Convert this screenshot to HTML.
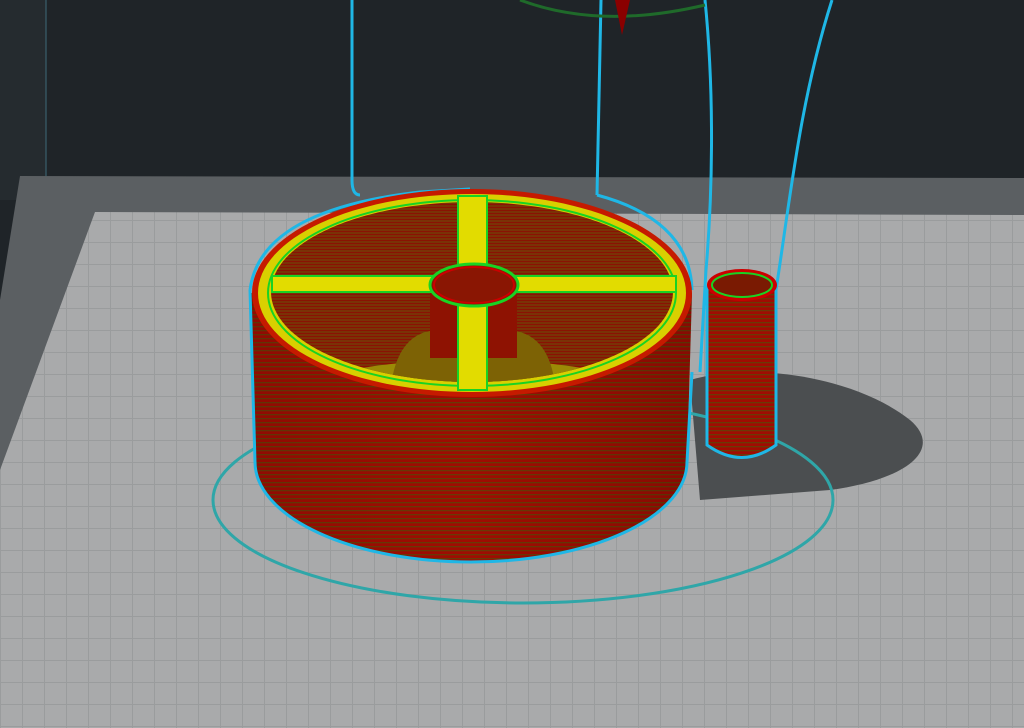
<!DOCTYPE html>
<html><head><style>html,body{margin:0;padding:0;overflow:hidden;background:#1f2428}svg{display:block}</style></head>
<body>
<svg width="1024" height="728" viewBox="0 0 1024 728" xmlns="http://www.w3.org/2000/svg">
<defs>
<pattern id="grid" width="22" height="22" patternUnits="userSpaceOnUse">
<rect width="22" height="22" fill="#a9aaab"/>
<path d="M0 0.5H22M0.5 0V22" stroke="#9a9c9d" stroke-width="1"/>
</pattern>
<pattern id="stripe" width="4" height="4" patternUnits="userSpaceOnUse">
<rect width="4" height="4" fill="#a00c02"/>
<rect y="2" width="4" height="1.3" fill="#6a3a05"/>
</pattern>
<pattern id="stripe2" width="4" height="3" patternUnits="userSpaceOnUse">
<rect width="4" height="3" fill="#8a1203"/>
<rect y="1.5" width="4" height="1" fill="#6b5208"/>
</pattern>
<linearGradient id="bodyShade" x1="0" x2="1" y1="0" y2="0">
<stop offset="0" stop-color="#000" stop-opacity="0.1"/>
<stop offset="0.5" stop-color="#000" stop-opacity="0"/>
<stop offset="1" stop-color="#000" stop-opacity="0.15"/>
</linearGradient>
<clipPath id="inner"><ellipse cx="472" cy="292" rx="201" ry="90"/></clipPath>
</defs>
<rect width="1024" height="728" fill="#1f2428"/>
<rect x="0" y="0" width="46" height="200" fill="#252b2f"/>
<line x1="46" y1="0" x2="46" y2="180" stroke="#3e6a78" stroke-width="1"/>
<polygon points="20,176 1024,178 1024,728 0,728 0,300" fill="#5b5f62"/>
<polygon points="95,212 1024,215 1024,728 0,728 0,470" fill="url(#grid)"/>
<!-- shadow -->
<path d="M690,380 C760,360 860,380 910,420 C945,450 905,480 830,490 L700,500 Z" fill="#4b4e50"/>
<!-- skirt -->
<ellipse cx="523" cy="500" rx="310" ry="103" fill="none" stroke="#2fa6a8" stroke-width="3"/>
<!-- cyan travel lines -->
<path d="M352,0 L352,180 Q352,195 360,195" fill="none" stroke="#1fb7e6" stroke-width="3"/>
<path d="M601,0 L597,195" fill="none" stroke="#1fb7e6" stroke-width="3"/>
<path d="M705,0 C715,100 712,200 706,270 L700,372" fill="none" stroke="#1fb7e6" stroke-width="3"/>
<path d="M832,0 C800,100 790,200 776,290" fill="none" stroke="#1fb7e6" stroke-width="3"/>
<path d="M520,0 Q600,30 705,5" fill="none" stroke="#1f6a2a" stroke-width="3"/>
<path d="M615,0 L622,35 L630,0" fill="#8a0000"/>
<!-- small cylinder -->
<path d="M707,287 L707,445 Q742,470 776,445 L776,287 Z" fill="url(#stripe)" stroke="#1fb7e6" stroke-width="3"/>
<ellipse cx="742" cy="285" rx="35" ry="16" fill="#c00"/>
<ellipse cx="742" cy="285" rx="30" ry="12" fill="#7a1a02" stroke="#19d323" stroke-width="2"/>
<!-- main cylinder body -->
<path d="M250,293 L255,462 A216 100 0 0 0 687,462 L692,293 Z" fill="url(#stripe)"/>
<path d="M250,293 L255,462 A216 100 0 0 0 687,462 L692,293 Z" fill="url(#bodyShade)"/>
<path d="M250,290 L255,462 A216 100 0 0 0 687,462 L692,372" fill="none" stroke="#1fb7e6" stroke-width="3"/>
<path d="M250,290 Q260,210 420,192 L470,189" fill="none" stroke="#1fb7e6" stroke-width="3"/>
<path d="M597,195 Q690,220 692,290" fill="none" stroke="#1fb7e6" stroke-width="3"/>
<!-- top ring -->
<ellipse cx="472" cy="293" rx="220" ry="104" fill="#c51a00"/>
<ellipse cx="472" cy="293" rx="214" ry="99" fill="#d9d000"/>
<ellipse cx="472" cy="293" rx="204" ry="93" fill="none" stroke="#19d323" stroke-width="2"/>
<ellipse cx="472" cy="292" rx="201" ry="90" fill="url(#stripe2)"/>
<g clip-path="url(#inner)">
<ellipse cx="472" cy="385" rx="150" ry="25" fill="#9b8a06"/>
<path d="M390,395 Q395,330 440,330 L505,330 Q552,330 556,395 Z" fill="#7d6205"/>
<rect x="430" y="288" width="87" height="70" fill="#8e1202"/>
</g>
<!-- cross -->
<rect x="458" y="196" width="29" height="194" fill="#e2dc00" stroke="#19d323" stroke-width="2"/>
<rect x="272" y="276" width="404" height="16" fill="#e2dc00" stroke="#19d323" stroke-width="2"/>
<ellipse cx="474" cy="285" rx="44" ry="21" fill="#8a1603" stroke="#19d323" stroke-width="3"/>
<ellipse cx="474" cy="285" rx="40" ry="18" fill="none" stroke="#c00" stroke-width="2"/>
</svg>
</body></html>
